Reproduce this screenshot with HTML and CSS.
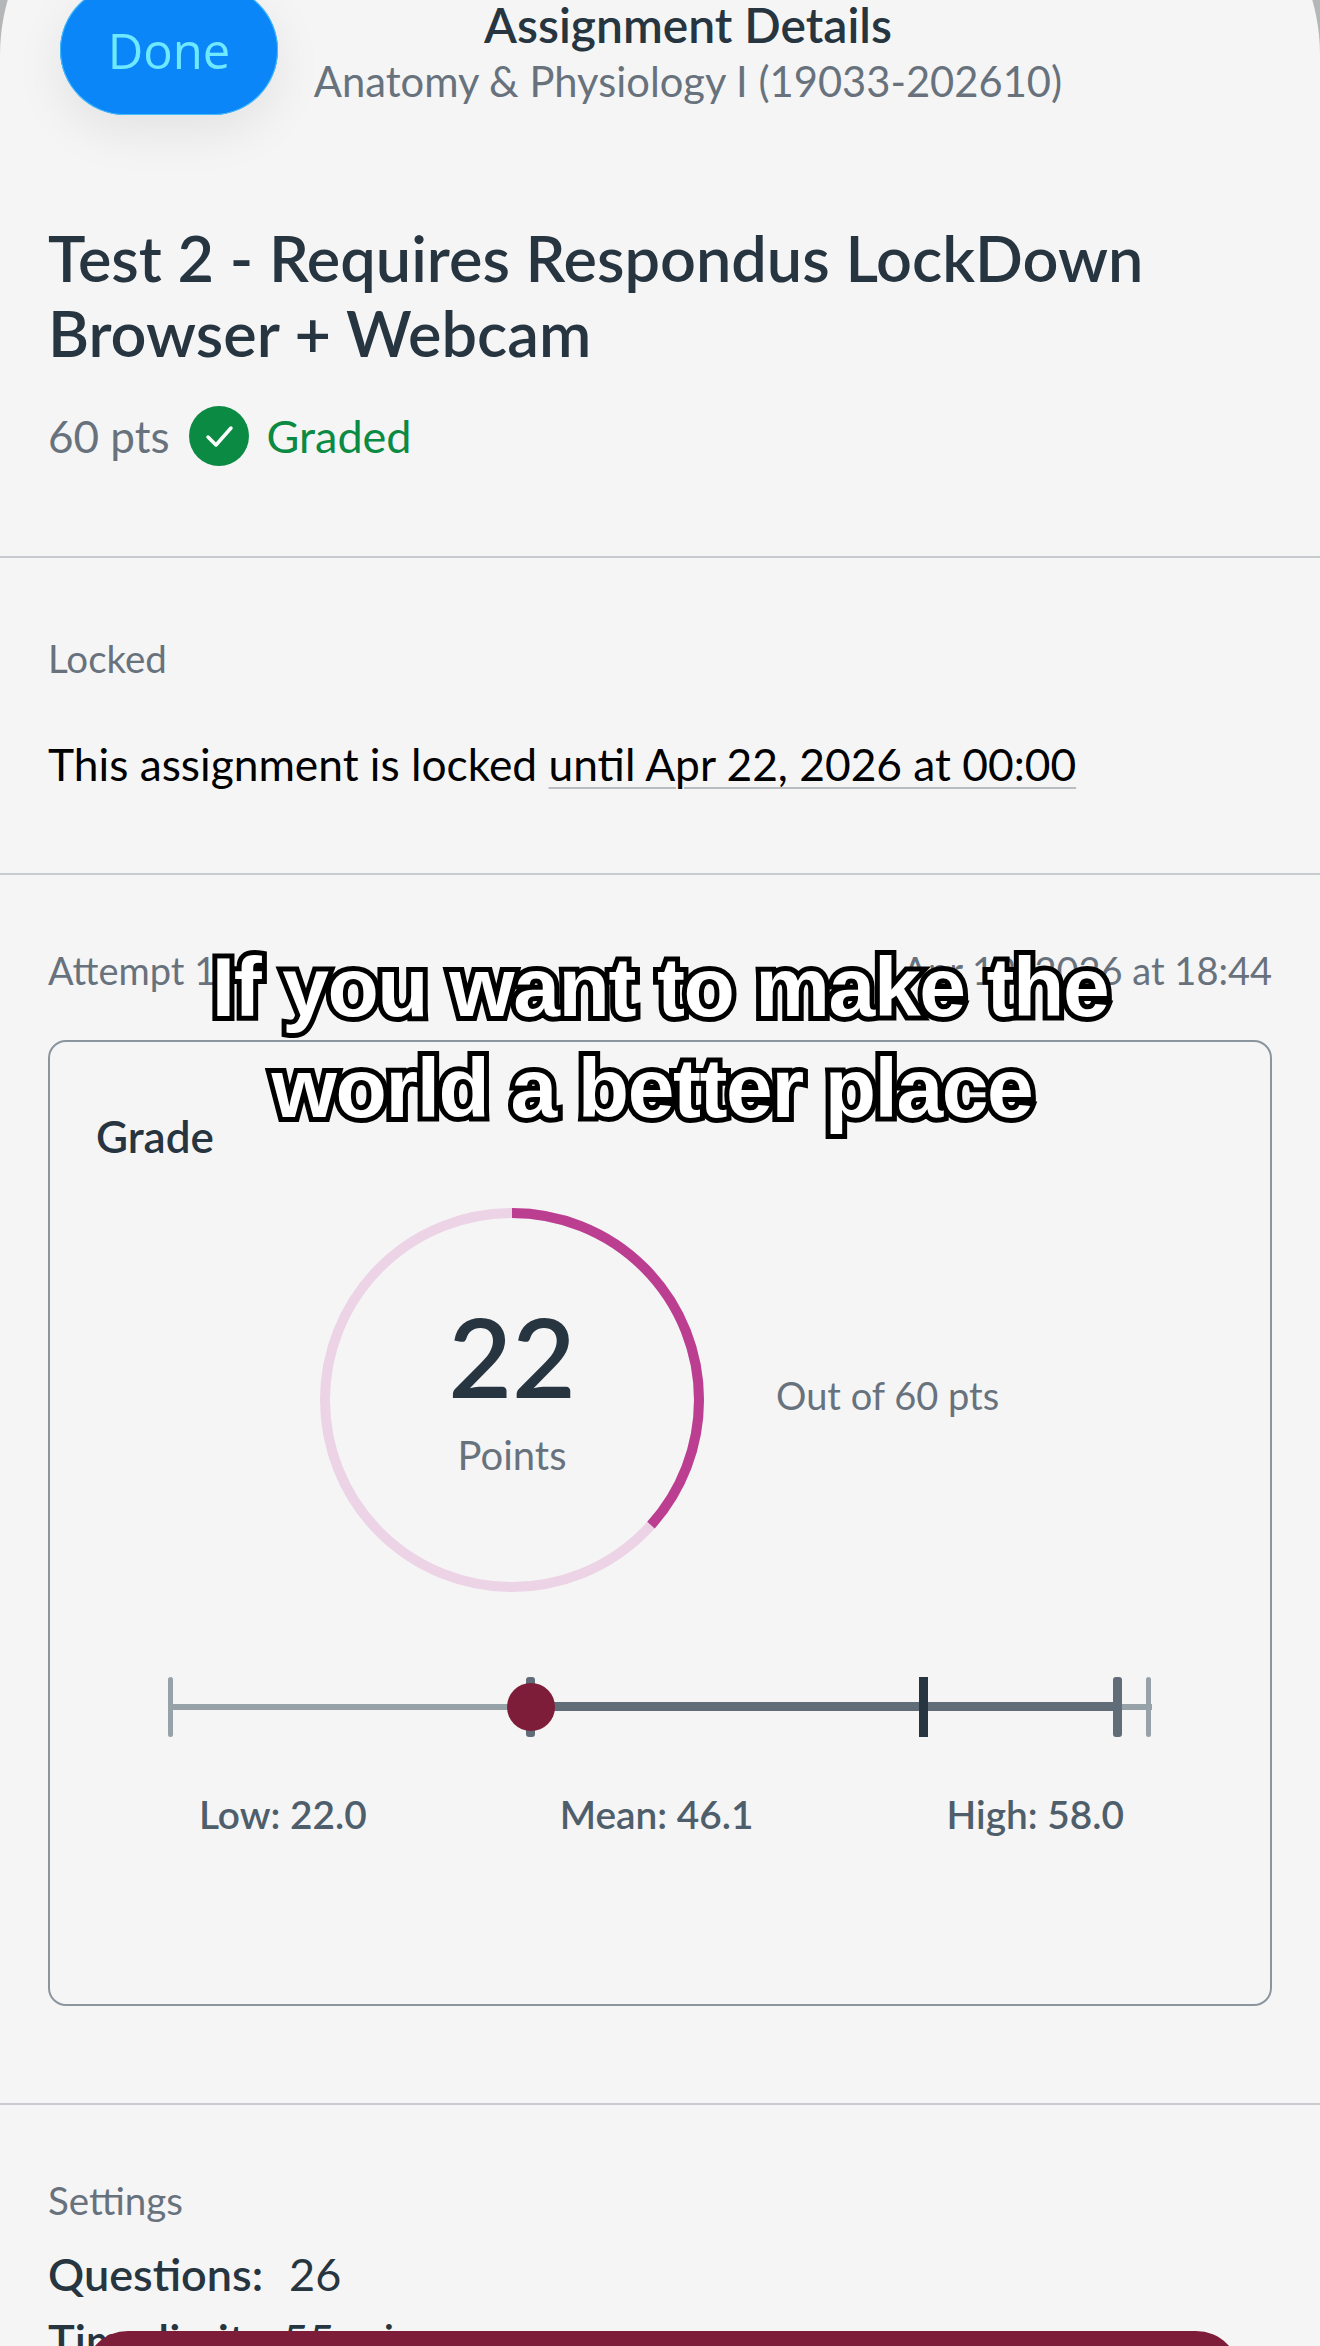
FILE: index.html
```html
<!DOCTYPE html>
<html lang="en">
<head>
    <meta charset="UTF-8">
    <meta name="viewport" content="width=device-width, initial-scale=1.0">
    <title>Assignment Details</title>
    <link rel="stylesheet" href="styles.css">
</head>
<body>
    <div class="sheet">
        <button class="done-btn">Done</button>

        <header class="header">
            <div class="header-title">Assignment Details</div>
            <div class="header-sub">Anatomy &amp; Physiology I (19033-202610)</div>
        </header>

        <section class="section title-section">
            <h1 class="title">Test 2 - Requires Respondus LockDown Browser + Webcam</h1>
            <div class="status-row">
                <span class="pts">60 pts</span>
                <svg class="status-icon" xmlns="http://www.w3.org/2000/svg" width="60" height="60" viewBox="0 0 60 60">
                    <circle cx="30" cy="30" r="30" fill="#0b8a43"></circle>
                    <path d="M19 31l8 8 15-17" fill="none" stroke="white" stroke-width="3.5" stroke-linecap="round" stroke-linejoin="round"></path>
                </svg>
                <span class="graded">Graded</span>
            </div>
        </section>

        <section class="section locked-section">
            <div class="section-label">Locked</div>
            <p class="locked-text">This assignment is locked <span class="locked-date">until Apr 22, 2026 at 00:00</span></p>
        </section>

        <section class="section attempt-section">
            <div class="attempt-row">
                <span>Attempt 1</span>
                <span>Apr 19, 2026 at 18:44</span>
            </div>

            <div class="grade-card">
                <div class="grade-label">Grade</div>

                <div class="score-row">
                    <div class="ring">
                        <svg xmlns="http://www.w3.org/2000/svg" width="384" height="384" viewBox="0 0 384 384">
                            <circle cx="192" cy="192" r="187" fill="none" stroke="#ecd3e5" stroke-width="10"></circle>
                            <circle cx="192" cy="192" r="187" fill="none" stroke="#bb3e91" stroke-width="10" pathLength="60" stroke-dasharray="22 60" transform="rotate(-90 192 192)"></circle>
                        </svg>
                        <div class="ring-text">
                            <div class="ring-value">22</div>
                            <div class="ring-label">Points</div>
                        </div>
                    </div>
                    <div class="out-of">Out of 60 pts</div>
                </div>

                <div class="box-plot">
                    <div class="plot-line"></div>
                    <div class="plot-range"></div>
                    <div class="tick tick-min"></div>
                    <div class="tick tick-q1"></div>
                    <div class="tick tick-median"></div>
                    <div class="tick tick-q3"></div>
                    <div class="tick tick-max"></div>
                    <div class="plot-dot"></div>
                </div>

                <div class="plot-labels">
                    <span>Low: 22.0</span>
                    <span>Mean: 46.1</span>
                    <span>High: 58.0</span>
                </div>
            </div>
        </section>

        <section class="settings-section">
            <div class="section-label">Settings</div>
            <div class="setting-row"><strong>Questions:</strong><span>26</span></div>
            <div class="setting-row"><strong>Time limit:</strong><span>55 min</span></div>
        </section>

        <div class="caption">
            <span class="caption-line">If you want to make the</span>
            <span class="caption-line caption-line-2">world a better place</span>
        </div>
        <div class="bottom-btn"></div>
    </div>
</body>
</html>
```

FILE: styles.css
```css
* {
    margin: 0;
    padding: 0;
    box-sizing: border-box;
}

html, body {
    height: 100vh;
    overflow: hidden;
}

body {
    font-family: Lato, "Open Sans", sans-serif;
    background-color: #b5b6b8;
    color: #273540;
}

/* the sheet's rounded top sits above the window, only the edge of the corners shows */
.sheet {
    position: relative;
    height: calc(100vh + 145px);
    margin-top: -145px;
    padding-top: 145px;
    background: #f5f5f6;
    border-radius: 200px 200px 0 0;
    overflow: hidden;
}

.done-btn {
    position: absolute;
    left: 60px;
    top: 130px;
    width: 218px;
    height: 130px;
    background: #0a86f8;
    border: none;
    border-radius: 65px;
    color: #6fe9ff;
    font-family: "Open Sans", Lato, sans-serif;
    font-size: 49px;
    box-shadow: inset 0 0 0 1px #45bdfb, 0 16px 50px rgba(0,0,0,0.08);
}

.header {
    text-align: center;
    padding-left: 56px;
    height: 116px;
}

.header-title {
    font-size: 48px;
    font-weight: 600;
    line-height: 50px;
}

.header-sub {
    margin-top: 3px;
    font-size: 41.7px;
    line-height: 56px;
    color: #68727d;
}

.section {
    padding: 0 48px;
    border-bottom: 2px solid #c7cbd0;
}

.title-section {
    height: 442px;
    padding-top: 104px;
}

.title {
    font-size: 63px;
    font-weight: 600;
    line-height: 75px;
}

.status-row {
    display: flex;
    align-items: center;
    margin-top: 36px;
    font-size: 44px;
}

.pts {
    color: #68727d;
}

.status-icon {
    margin: 0 18px 0 19px;
}

.graded {
    font-size: 45px;
    color: #0b8a43;
}

.locked-section {
    height: 317px;
    padding-top: 75px;
}

.section-label {
    font-size: 38.5px;
    line-height: 50px;
    color: #68727d;
}

.locked-text {
    margin-top: 51px;
    font-size: 44.3px;
    line-height: 60px;
    color: #000;
}

.locked-date {
    text-decoration: underline;
    text-decoration-color: #b9bdc2;
    text-decoration-thickness: 2px;
    text-underline-offset: 6px;
}

.attempt-section {
    height: 1230px;
    padding-top: 70px;
}

.attempt-row {
    display: flex;
    justify-content: space-between;
    font-size: 38px;
    line-height: 50px;
    color: #68727d;
}

.grade-card {
    margin-top: 45px;
    height: 966px;
    border: 2px solid #8b959e;
    border-radius: 18px;
    padding: 66px 46px 0;
}

.grade-label {
    font-size: 44px;
    font-weight: 600;
    line-height: 56px;
}

.score-row {
    display: flex;
    align-items: center;
    margin-top: 44px;
    padding-left: 224px;
}

.ring {
    position: relative;
    width: 384px;
    height: 384px;
}

.ring-text {
    position: absolute;
    inset: 0;
    text-align: center;
    padding-top: 82px;
}

.ring-value {
    margin-bottom: 10px;
    font-size: 110px;
    font-weight: 600;
    line-height: 130px;
}

.ring-label {
    font-size: 40px;
    line-height: 50px;
    color: #68727d;
}

.out-of {
    margin: 0 0 10px 72px;
    font-size: 38px;
    color: #68727d;
}

.box-plot {
    position: relative;
    height: 60px;
    margin: 85px 0 0 72px;
    width: 984px;
}

.plot-line {
    position: absolute;
    left: 0;
    right: 0;
    top: 27px;
    height: 6px;
    background: #97a1a8;
}

.plot-range {
    position: absolute;
    left: 362px;
    width: 588px;
    top: 25px;
    height: 9px;
    background: #606c78;
}

.tick {
    position: absolute;
    top: 0;
    height: 60px;
    border-radius: 3px;
}

.tick-min {
    left: 0;
    width: 5px;
    background: #97a1a8;
}

.tick-q1 {
    left: 358px;
    width: 9px;
    background: #606c78;
}

.tick-median {
    left: 751px;
    width: 9px;
    border-radius: 0;
    background: #273540;
}

.tick-q3 {
    left: 945px;
    width: 9px;
    background: #606c78;
}

.tick-max {
    left: 978px;
    width: 5px;
    background: #97a1a8;
}

.plot-dot {
    position: absolute;
    left: 339px;
    top: 6px;
    width: 48px;
    height: 48px;
    border-radius: 50%;
    background: #7d1d3a;
}

.plot-labels {
    display: flex;
    justify-content: space-between;
    margin: 49px 0 0 103px;
    width: 925px;
    font-size: 38.8px;
    font-weight: 600;
    line-height: 56px;
    color: #4f5e6b;
}

.settings-section {
    padding: 70px 48px 0;
}

.settings-section .section-label {
    margin-bottom: 19px;
}

.setting-row {
    display: flex;
    gap: 26px;
    margin-top: 5px;
    font-size: 45px;
    line-height: 61px;
}

.setting-row strong {
    font-weight: 600;
}

.caption {
    position: absolute;
    left: 0;
    right: 0;
    top: 1082px;
    text-align: center;
    font-family: "Liberation Sans", Arial, sans-serif;
    font-size: 84px;
    font-weight: bold;
    line-height: 101px;
    letter-spacing: -1.4px;
    color: white;
    -webkit-text-stroke: 10px black;
    paint-order: stroke fill;
    text-shadow: 0 3px 0 black;
}

.caption-line {
    display: block;
}

.caption-line-2 {
    padding-right: 16px;
    letter-spacing: -1.4px;
}

.bottom-btn {
    position: absolute;
    left: 84px;
    width: 1156px;
    top: 2476px;
    height: 100px;
    background: #7d1d3a;
    border-radius: 44px;
}
```
